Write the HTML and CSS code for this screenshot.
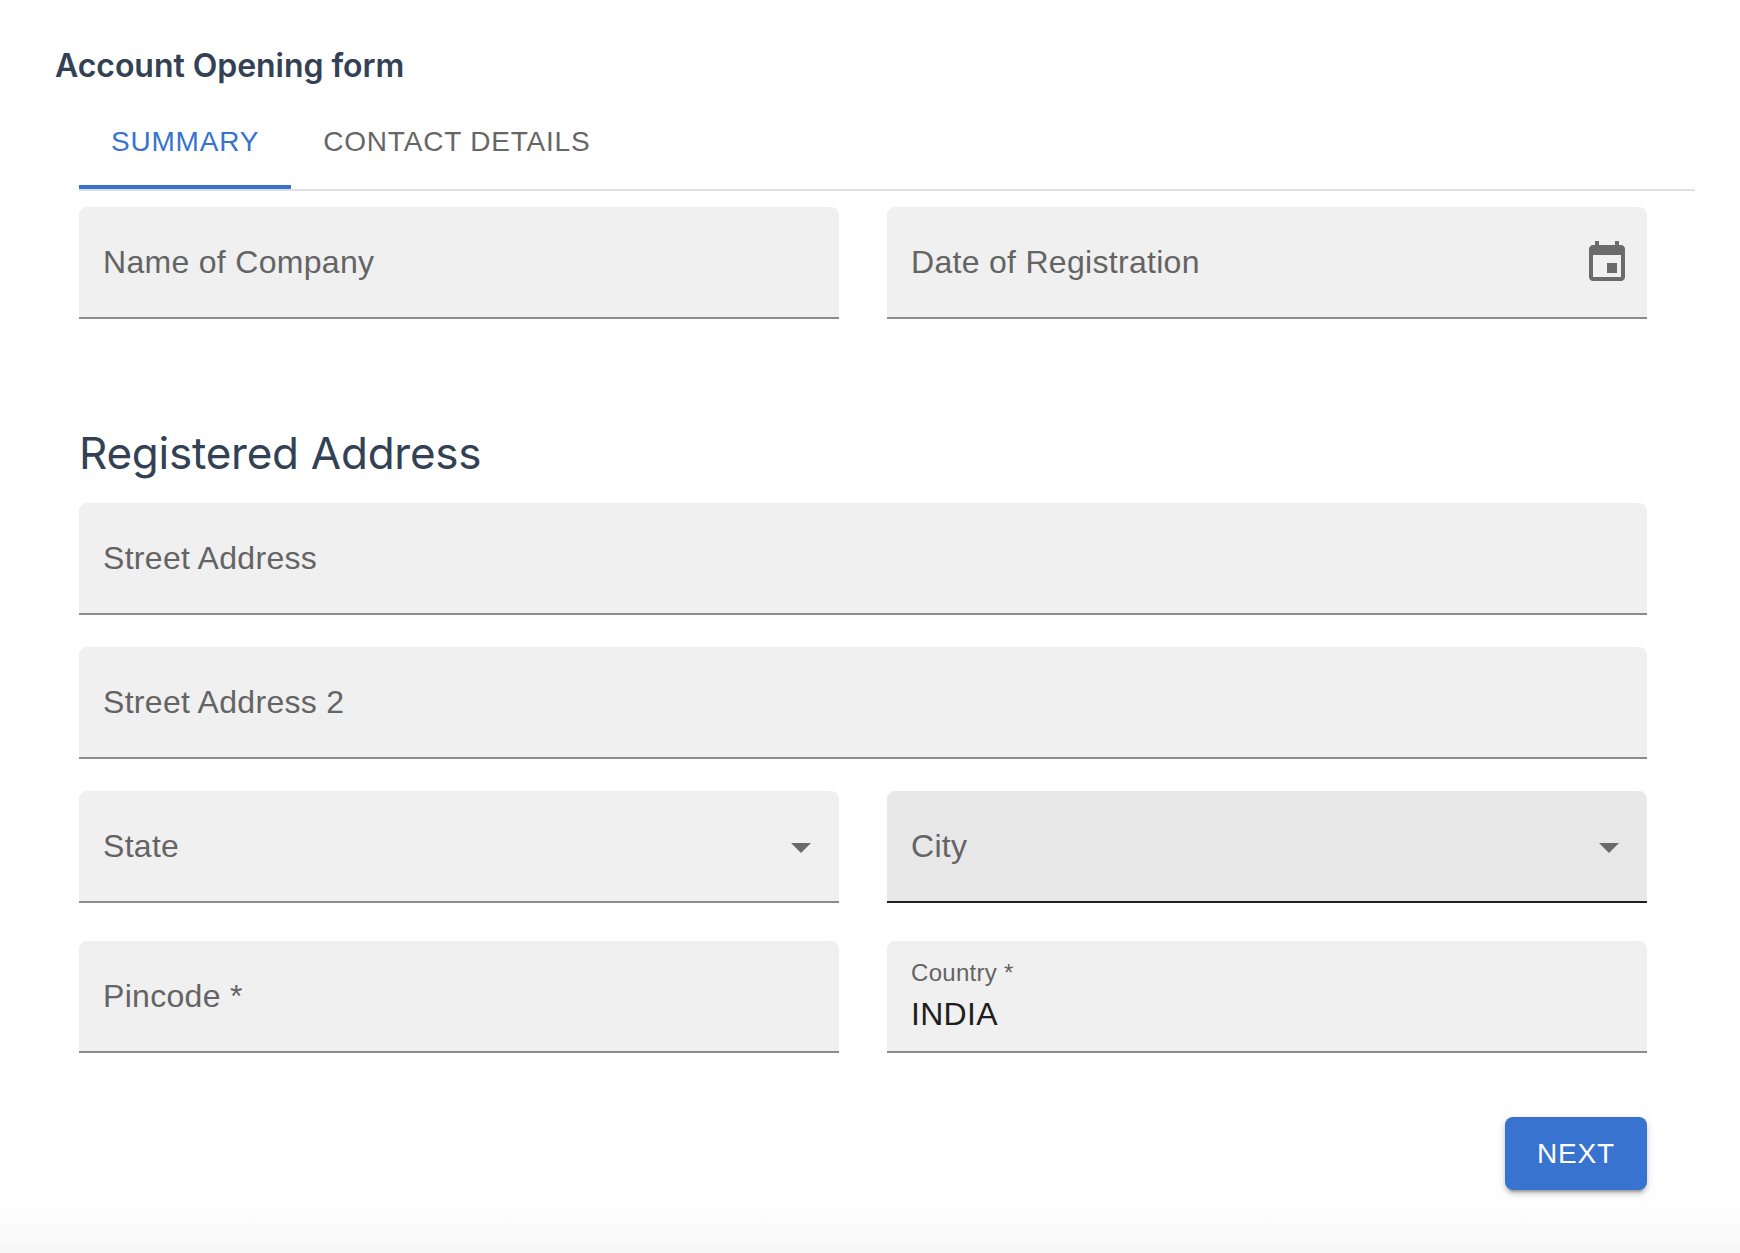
FILE: index.html
```html
<!DOCTYPE html>
<html lang="en">
<head>
<meta charset="utf-8">
<title>Account Opening form</title>
<link rel="stylesheet" href="styles.css">
</head>
<body>
<main class="page">
  <h1 class="form-title">Account Opening form</h1>
  <div class="tabs-wrap">
    <nav class="tabs">
      <div class="tab tab-active">SUMMARY</div>
      <div class="tab">CONTACT DETAILS</div>
    </nav>
  </div>
  <form class="form">
    <div class="row row-first">
      <div class="field"><span class="label">Name of Company</span></div>
      <div class="field">
        <span class="label">Date of Registration</span>
        <svg class="icon icon-cal" viewBox="0 0 24 24"><path d="M17 12h-5v5h5v-5zM16 1v2H8V1H6v2H5c-1.11 0-1.99.9-1.99 2L3 19c0 1.1.89 2 2 2h14c1.1 0 2-.9 2-2V5c0-1.1-.9-2-2-2h-1V1h-2zm3 18H5V8h14v11z"/></svg>
      </div>
    </div>
    <h2 class="section-title">Registered Address</h2>
    <div class="row row-single"><div class="field"><span class="label">Street Address</span></div></div>
    <div class="row row-single"><div class="field"><span class="label">Street Address 2</span></div></div>
    <div class="row row-selects">
      <div class="field">
        <span class="label">State</span>
        <svg class="icon icon-arrow" viewBox="0 0 24 24"><path d="M7 10l5 5 5-5z"/></svg>
      </div>
      <div class="field field-hover">
        <span class="label">City</span>
        <svg class="icon icon-arrow" viewBox="0 0 24 24"><path d="M7 10l5 5 5-5z"/></svg>
      </div>
    </div>
    <div class="row row-last">
      <div class="field"><span class="label">Pincode *</span></div>
      <div class="field field-filled">
        <span class="label-small">Country *</span>
        <span class="value">INDIA</span>
      </div>
    </div>
    <div class="actions"><button type="button" class="btn-next">NEXT</button></div>
  </form>
</main>
</body>
</html>
```
FILE: styles.css
```css
* { box-sizing: border-box; }
html, body { margin: 0; padding: 0; }
body {
  height: 1253px;
  overflow: hidden;
  background: linear-gradient(to bottom, #ffffff 0, #ffffff 1150px, #fdfdfd 1215px, #f6f6f6 1253px);
  font-family: "Liberation Sans", Arial, sans-serif;
}
.page { padding: 44px 45px 0 55px; }
.form-title {
  margin: 0;
  font-family: Inter, sans-serif;
  font-size: 32px;
  line-height: 44px;
  font-weight: 600;
  letter-spacing: -0.05px;
  color: #334155;
}
.tabs-wrap { padding-left: 24px; margin-top: 11px; }
.tabs {
  display: flex;
  height: 92px;
  border-bottom: 2px solid #e0e0e0;
}
.tab {
  height: 90px;
  padding: 0 32px;
  display: flex;
  align-items: center;
  font-size: 28px;
  letter-spacing: 0.8px;
  color: #666666;
  border-bottom: 4px solid transparent;
}
.tab-active {
  color: #3873cf;
  border-bottom-color: #3873cf;
}
.form { padding: 16px 48px 0 24px; }
.row { display: grid; grid-template-columns: 760px 760px; column-gap: 48px; }
.row-single { grid-template-columns: 1568px; margin-bottom: 32px; }
.row-selects { margin-bottom: 38px; }
.field {
  position: relative;
  height: 112px;
  padding: 0 24px;
  display: flex;
  align-items: center;
  background: #f0f0f0;
  border-bottom: 2px solid #8b8b8b;
  border-radius: 8px 8px 0 0;
}
.field-hover { background: #e8e8e8; border-bottom-color: #1e1e1e; }
.field-filled { flex-direction: column; align-items: flex-start; justify-content: flex-start; }
.label { font-size: 32px; letter-spacing: 0.3px; color: #646464; }
.label-small { margin-top: 18px; font-size: 24px; line-height: 28px; letter-spacing: 0.3px; color: #646464; }
.value { margin-top: 8px; font-size: 32px; line-height: 38px; letter-spacing: 0.3px; color: #1e1e1e; }
.icon { position: absolute; width: 48px; height: 48px; fill: #6b6b6b; }
.icon-cal { right: 16px; top: 32px; }
.icon-arrow { right: 14px; top: 32px; }
.section-title {
  margin: 104px 0 0;
  height: 80px;
  font-family: Inter, sans-serif;
  font-size: 44px;
  line-height: 60px;
  font-weight: 400;
  letter-spacing: -0.25px;
  color: #334155;
}
.actions { display: flex; justify-content: flex-end; margin-top: 64px; }
.btn-next {
  width: 142px;
  height: 73px;
  border: 0;
  border-radius: 8px;
  background: #3873cf;
  color: #ffffff;
  font-family: "Liberation Sans", Arial, sans-serif;
  font-size: 28px;
  letter-spacing: 0.8px;
  box-shadow: 0 6px 2px -4px rgba(0,0,0,.2), 0 4px 4px rgba(0,0,0,.14), 0 2px 10px rgba(0,0,0,.12);
}
```
